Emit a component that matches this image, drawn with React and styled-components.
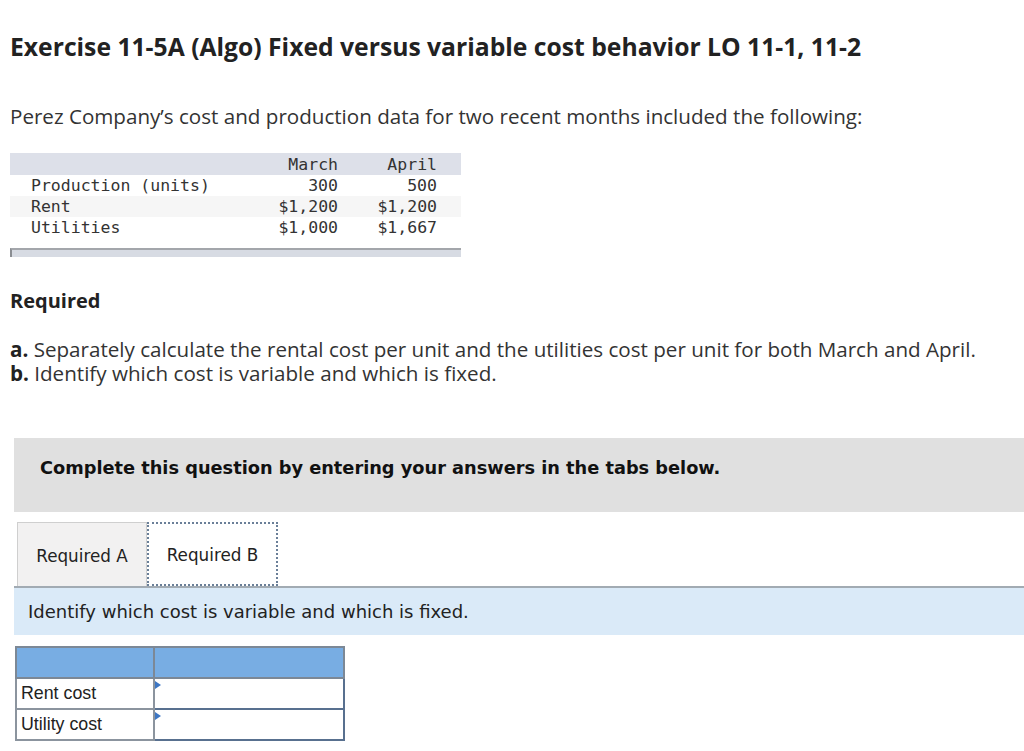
import React from "react";
import styled, { createGlobalStyle } from "styled-components";

const GlobalStyle = createGlobalStyle`
  html, body {
    margin: 0;
    padding: 0;
    background: #fff;
  }
  body {
    font-family: "Open Sans", sans-serif;
    color: #222;
  }
`;

const Page = styled.div`
  width: 1024px;
  height: 751px;
  overflow: hidden;
  padding-top: 30px;
  box-sizing: border-box;
`;

const Title = styled.h1`
  margin: 0 0 0 10px;
  font-family: "Open Sans", sans-serif;
  font-weight: 700;
  font-size: 24.7px;
  line-height: 34px;
  color: #222;
`;

const Text = styled.p`
  margin: ${(p) => p.$margin || "0"};
  padding-left: 10px;
  font-family: "Open Sans", sans-serif;
  font-size: 20.6px;
  line-height: 24px;
  color: #333;
  white-space: nowrap;
  b {
    font-weight: 700;
    color: #222;
  }
`;

const DataTable = styled.table`
  margin: 25px 0 0 10px;
  width: 451px;
  border-collapse: collapse;
  font-family: "DejaVu Sans Mono", monospace;
  font-size: 16.5px;
  color: #333;
  th {
    background: #dde0e9;
    font-weight: 400;
    height: 22px;
    text-align: right;
    padding: 0;
  }
  td {
    height: 21px;
    padding: 0;
    text-align: right;
  }
  td:first-child {
    text-align: left;
    padding-left: 21px;
  }
  tr:nth-child(2) td {
    background: #f6f6f6;
  }
`;

const TableFoot = styled.div`
  margin: 10px 0 0 10px;
  width: 449px;
  height: 7px;
  background: #d7dbe3;
  border-top: 2px solid #a3a6ab;
  border-left: 2px solid #8a8d92;
`;

const Required = styled.h2`
  margin: 32px 0 0 10px;
  font-family: "Open Sans", sans-serif;
  font-weight: 700;
  font-size: 20px;
  line-height: 24px;
  color: #222;
`;

const Banner = styled.div`
  margin: 53px 0 0 14px;
  height: 74px;
  box-sizing: border-box;
  background: #e0e0e0;
  padding: 19px 0 0 26px;
  font-family: "DejaVu Sans", Verdana, sans-serif;
  font-weight: 700;
  font-size: 17.75px;
  line-height: 22px;
  color: #111;
`;

const Tabs = styled.div`
  margin: 10px 0 0 14px;
  display: flex;
  align-items: flex-end;
  padding-left: 3px;
  border-bottom: 2px solid #a2abb3;
`;

const Tab = styled.div`
  width: ${(p) => p.$w}px;
  height: 64px;
  box-sizing: border-box;
  display: flex;
  align-items: center;
  justify-content: center;
  padding-top: 2px;
  font-family: "DejaVu Sans", Verdana, sans-serif;
  font-size: 16.8px;
  color: #222;
  background: ${(p) => (p.$active ? "#fff" : "#f2f1f1")};
  border: ${(p) => (p.$active ? "2px dotted #6a7f98" : "1px solid #cfcfcf")};
  border-bottom: ${(p) => (p.$active ? "2px dotted #6a7f98" : "none")};
`;

const Instruction = styled.div`
  margin-left: 14px;
  height: 47px;
  background: #daeaf8;
  display: flex;
  align-items: center;
  padding-left: 14px;
  font-family: "DejaVu Sans", Verdana, sans-serif;
  font-size: 18px;
  color: #222;
`;

const AnswerTable = styled.table`
  margin: 11px 0 0 15px;
  border-collapse: collapse;
  font-family: "Liberation Sans", Arial, sans-serif;
  font-size: 17.8px;
  color: #222;
  th {
    background: #78ade3;
    border: 2px solid #7c8896;
    height: 29px;
    padding: 0;
  }
  td {
    border: 2px solid #8b949e;
    height: 29px;
    padding: 0 0 0 4px;
  }
`;

const InputCell = styled.td`
  && {
    position: relative;
    width: 186px;
    border: 2px solid #58708f;
    background: #fff;
    padding: 0;
  }
  &::before {
    content: "";
    position: absolute;
    left: 0;
    top: 2px;
    border-left: 6px solid #3d77c4;
    border-top: 4px solid transparent;
    border-bottom: 4px solid transparent;
  }
`;

const rows = [
  ["Production (units)", "300", "500"],
  ["Rent", "$1,200", "$1,200"],
  ["Utilities", "$1,000", "$1,667"],
];

export default function App() {
  return (
    <Page>
      <GlobalStyle />
      <Title>Exercise 11-5A (Algo) Fixed versus variable cost behavior LO 11-1, 11-2</Title>
      <Text $margin="40px 0 0 0">
        Perez Company’s cost and production data for two recent months included the following:
      </Text>
      <DataTable>
        <colgroup>
          <col style={{ width: 239 }} />
          <col style={{ width: 89 }} />
          <col style={{ width: 99 }} />
          <col style={{ width: 24 }} />
        </colgroup>
        <thead>
          <tr>
            <th />
            <th>March</th>
            <th>April</th>
            <th />
          </tr>
        </thead>
        <tbody>
          {rows.map((r) => (
            <tr key={r[0]}>
              <td>{r[0]}</td>
              <td>{r[1]}</td>
              <td>{r[2]}</td>
              <td />
            </tr>
          ))}
        </tbody>
      </DataTable>
      <TableFoot />
      <Required>Required</Required>
      <Text $margin="24px 0 0 0">
        <b>a.</b> Separately calculate the rental cost per unit and the utilities cost per unit for both March and April.
      </Text>
      <Text>
        <b>b.</b> Identify which cost is variable and which is fixed.
      </Text>
      <Banner>Complete this question by entering your answers in the tabs below.</Banner>
      <Tabs>
        <Tab $w={130}>Required A</Tab>
        <Tab $w={131} $active>Required B</Tab>
      </Tabs>
      <Instruction>Identify which cost is variable and which is fixed.</Instruction>
      <AnswerTable>
        <thead>
          <tr>
            <th style={{ width: 136 }} />
            <th style={{ width: 188 }} />
          </tr>
        </thead>
        <tbody>
          <tr>
            <td>Rent cost</td>
            <InputCell />
          </tr>
          <tr>
            <td>Utility cost</td>
            <InputCell />
          </tr>
        </tbody>
      </AnswerTable>
    </Page>
  );
}
